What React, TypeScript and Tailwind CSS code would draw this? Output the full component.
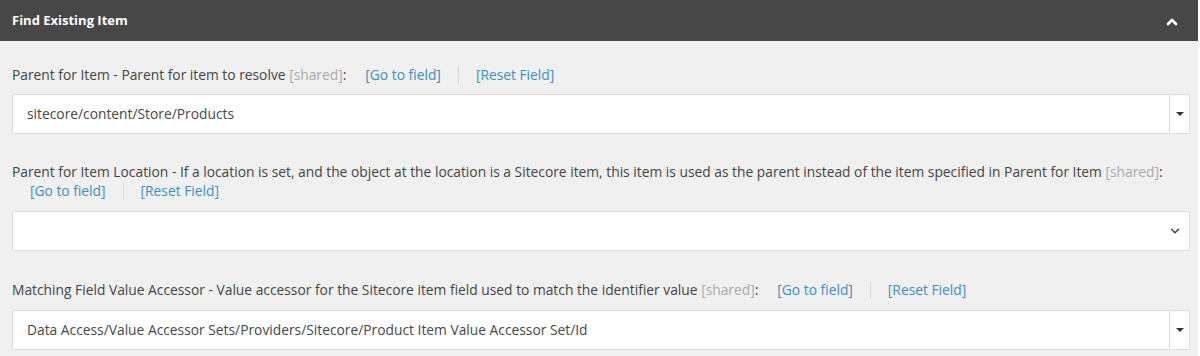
import { ChevronDown, ChevronUp } from "lucide-react";

const font = { fontFamily: '"Open Sans", "Liberation Sans", sans-serif' };

function FieldLinks({ className = "" }: { className?: string }) {
  return (
    <span className={`inline-flex items-center ${className}`}>
      <a className="text-[#3a8fc4]">[Go to field]</a>
      <span className="mx-[17px] h-[18px] w-px bg-[#d8d8d8]" />
      <a className="text-[#3a8fc4]">[Reset Field]</a>
    </span>
  );
}

function Shared() {
  return <span className="text-[#aaaaaa]">[shared]</span>;
}

function DropdownBox({ value, kind }: { value?: string; kind: "caret" | "chevron" }) {
  return (
    <div className="flex h-10 items-stretch rounded-[2px] border border-[#dcdcdc] bg-white">
      <div className="flex flex-1 items-center pl-[14px] text-[#474747]">{value}</div>
      {kind === "caret" ? (
        <div className="flex w-5 items-center justify-center border-l border-[#dcdcdc]">
          <span className="h-0 w-0 border-x-[4px] border-t-[4px] border-x-transparent border-t-[#333]" />
        </div>
      ) : (
        <div className="flex w-7 items-center justify-center">
          <ChevronDown className="size-[14px] text-[#444]" strokeWidth={2.5} />
        </div>
      )}
    </div>
  );
}

export default function App() {
  return (
    <div className="h-[356px] w-[1198px] bg-[#f0f0f0] text-[13.8px] text-[#444]" style={font}>
      <div className="flex h-[41px] items-center justify-between bg-[#474747] pl-3 pr-[18px]">
        <span className="text-[13px] font-bold text-white">Find Existing Item</span>
        <ChevronUp className="size-[16px] translate-y-px text-white" strokeWidth={4} />
      </div>

      <div className="pl-3 pr-2">
        <div className="pt-[22px]">
          <div className="flex h-[24px] items-center">
            <span>
              Parent for Item - Parent for item to resolve <Shared />:
            </span>
            <FieldLinks className="ml-[19px]" />
          </div>
          <div className="mt-[7px]">
            <DropdownBox value="sitecore/content/Store/Products" kind="caret" />
          </div>
        </div>

        <div className="pt-[29px]">
          <div className="leading-[18px]">
            Parent for Item Location - If a location is set, and the object at the location is a Sitecore item, this item is used as the parent instead of the item specified in Parent for Item <Shared />:
          </div>
          <div className="flex h-[20px] items-center pl-[18px]">
            <FieldLinks />
          </div>
          <div className="mt-[10px]">
            <DropdownBox kind="chevron" />
          </div>
        </div>

        <div className="pt-[27px]">
          <div className="flex h-[24px] items-center">
            <span>
              Matching Field Value Accessor - Value accessor for the Sitecore item field used to match the identifier value <Shared />:
            </span>
            <FieldLinks className="ml-[19px]" />
          </div>
          <div className="mt-[8px]">
            <DropdownBox value="Data Access/Value Accessor Sets/Providers/Sitecore/Product Item Value Accessor Set/Id" kind="caret" />
          </div>
        </div>
      </div>
    </div>
  );
}
